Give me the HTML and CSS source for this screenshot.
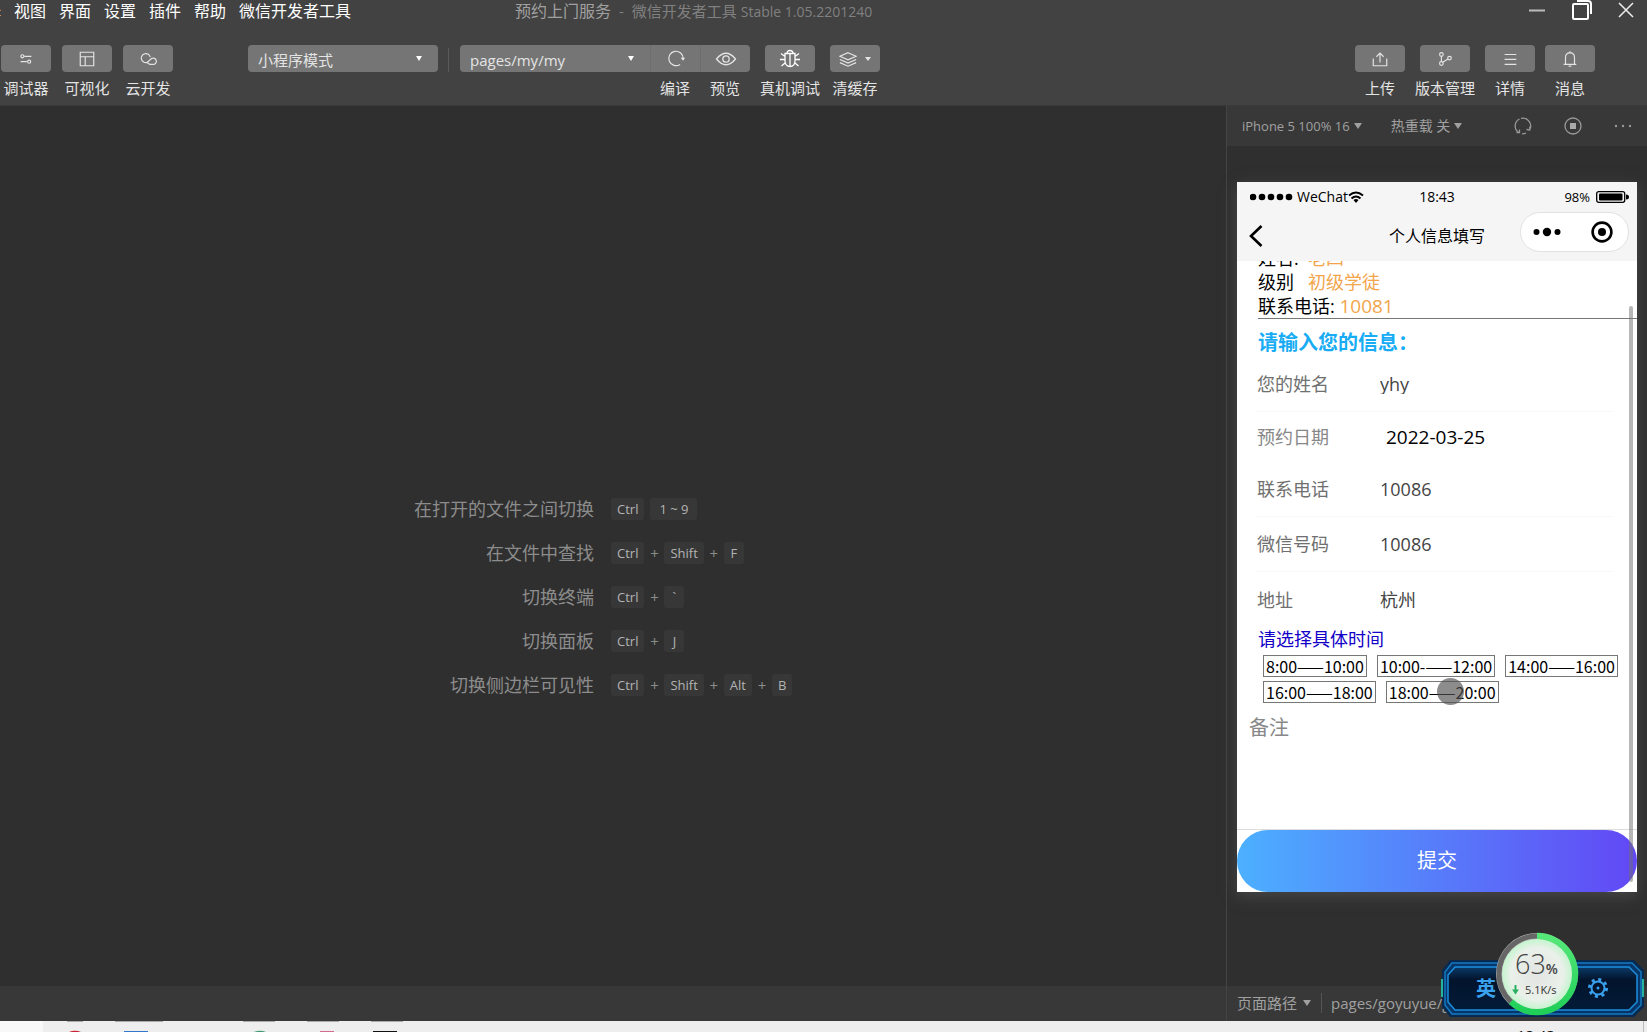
FILE: index.html
```html
<!DOCTYPE html>
<html lang="zh-CN">
<head>
<meta charset="utf-8">
<title>预约上门服务 - 微信开发者工具</title>
<link rel="stylesheet" href="styles.css">
</head>
<body>
<header class="header">
  <div class="titlebar">
    <nav class="menu">
      <a class="menu-first" href="#">选择</a><a href="#">视图</a><a href="#">界面</a><a href="#">设置</a><a href="#">插件</a><a href="#">帮助</a><a href="#">微信开发者工具</a>
    </nav>
    <div class="title"><span class="project">预约上门服务</span><span>-</span><span>微信开发者工具 <span class="version">Stable 1.05.2201240</span></span></div>
    <div class="window-buttons">
      <button aria-label="最小化"><svg width="18" height="22" viewBox="0 0 18 22"><path d="M1 10.500h16" stroke="#bbb" stroke-width="2"/></svg></button>
      <button aria-label="还原"><svg width="22" height="22" viewBox="0 0 22 22" fill="none" stroke="#fff" stroke-width="2"><rect x="2" y="4" width="15" height="15" rx="1"/><path d="M6 1h11q3 0 3 3v10"/></svg></button>
      <button aria-label="关闭"><svg width="16" height="22" viewBox="0 0 16 22" fill="none" stroke="#eee" stroke-width="1.500"><path d="M1 3l14 14M15 3L1 17"/></svg></button>
    </div>
  </div>
  <div class="toolbar">
    <div class="tools views">
      <div class="tool"><button class="tool-button" id="t1" aria-labelledby="l1"><svg class="icon" viewBox="0 0 20 20"><circle cx="6" cy="7" r="1.700"/><path d="M8 7h8M4 13h7"/><circle cx="13.500" cy="13" r="1.700"/></svg></button><label id="l1" for="t1">调试器</label></div>
      <div class="tool"><button class="tool-button" id="t2" aria-labelledby="l2"><svg class="icon" viewBox="0 0 20 20"><path d="M2.500 2.500h15v15h-15zM2.500 7.500h15M8 7.500v10"/></svg></button><label id="l2" for="t2">可视化</label></div>
      <div class="tool"><button class="tool-button" id="t3" aria-labelledby="l3"><svg class="icon" viewBox="0 0 20 20"><path d="M12.500 8a5 5 0 1 0-3.500 5.800L14 9.500a3.500 3.500 0 1 1 1.500 6.500H12l-3-2.200"/></svg></button><label id="l3" for="t3">云开发</label></div>
    </div>
    <div class="picker mode"><select aria-label="模式"><option>小程序模式</option></select></div>
    <div class="divider"></div>
    <div class="compile">
      <div class="picker page"><select aria-label="页面"><option>pages/my/my</option></select></div>
      <div class="tool"><button class="tool-button joined" id="t4" aria-labelledby="l4"><svg class="icon" viewBox="0 0 20 20"><path d="M14.500 16A8 8 0 1 1 18 9.500"/><path d="M15 8.500h5l-2 3.500z" fill="#e4e4e4" stroke="none"/></svg></button><label id="l4" for="t4">编译</label></div>
      <div class="tool"><button class="tool-button joined last" id="t5" aria-labelledby="l5"><svg class="icon wide" viewBox="0 0 20 20"><path d="M.5 10Q10-1.500 19.500 10 10 21.500.5 10z"/><circle cx="10" cy="10" r="3.200"/></svg></button><label id="l5" for="t5">预览</label></div>
    </div>
    <div class="tools">
      <div class="tool"><button class="tool-button" id="t6" aria-labelledby="l6"><svg class="icon wide bright" viewBox="0 0 20 20"><path d="M7 4.500q0-3 3-3t3 3M5 4.500h10v7q0 6-5 6t-5-6zM10 4.500v13M5 7.500L1 4.500M5 10.500H0M5 14l-3.500 3M15 7.500l4-3M15 10.500h5M15 14l3.500 3"/></svg></button><label id="l6" for="t6">真机调试</label></div>
      <div class="tool"><button class="tool-button" id="t7" aria-labelledby="l7"><svg class="icon" viewBox="0 0 20 20"><path d="M10 3l9 4-9 4-9-4zM1 10.500l9 4 9-4M1 14l9 4 9-4"/></svg><span class="caret tiny"></span></button><label id="l7" for="t7">清缓存</label></div>
    </div>
    <div class="tools right">
      <div class="tool"><button class="tool-button" id="t8" aria-labelledby="l8"><svg class="icon" viewBox="0 0 20 20"><path d="M2.500 9.500v8h15v-8M10 14V4M6 7.500l4-4 4 4"/></svg></button><label id="l8" for="t8">上传</label></div>
      <div class="tool"><button class="tool-button" id="t9" aria-labelledby="l9"><svg class="icon" viewBox="0 0 20 20"><circle cx="6" cy="5" r="2"/><circle cx="6" cy="15" r="2"/><circle cx="15" cy="9" r="2"/><path d="M6 7v6M7.500 13.500l5.800-3.500"/></svg></button><label id="l9" for="t9">版本管理</label></div>
      <div class="tool"><button class="tool-button" id="t10" aria-labelledby="l10"><svg class="icon" viewBox="0 0 20 20"><path d="M4 5h13M4 10.500h13M4 16h13"/></svg></button><label id="l10" for="t10">详情</label></div>
      <div class="tool"><button class="tool-button" id="t11" aria-labelledby="l11"><svg class="icon" viewBox="0 0 20 20"><path d="M3 16h14M5 16V8.500q0-5 5-5.500 5 .5 5 5.500V16M10 3V1.500M8.500 18h3"/></svg></button><label id="l11" for="t11">消息</label></div>
    </div>
  </div>
</header>

<main class="main">
  <section class="editor">
    <dl class="shortcuts">
      <dt>在打开的文件之间切换</dt><dd><kbd>Ctrl</kbd><i></i><kbd class="range">1 ~ 9</kbd></dd>
      <dt>在文件中查找</dt><dd><kbd>Ctrl</kbd><b>+</b><kbd>Shift</kbd><b>+</b><kbd>F</kbd></dd>
      <dt>切换终端</dt><dd><kbd>Ctrl</kbd><b>+</b><kbd>`</kbd></dd>
      <dt>切换面板</dt><dd><kbd>Ctrl</kbd><b>+</b><kbd>J</kbd></dd>
      <dt>切换侧边栏可见性</dt><dd><kbd>Ctrl</kbd><b>+</b><kbd>Shift</kbd><b>+</b><kbd>Alt</kbd><b>+</b><kbd>B</kbd></dd>
    </dl>
    <div class="statusbar"></div>
  </section>

  <aside class="simulator">
    <div class="sim-toolbar">
      <button class="sim-device">iPhone 5 100% 16<span class="caret"></span></button>
      <button class="sim-reload">热重载 关<span class="caret"></span></button>
      <div class="sim-actions">
        <button aria-label="刷新"><svg width="18" height="18" viewBox="0 0 18 18" fill="none" stroke="#999" stroke-width="1.300"><path d="M5.500 2A7.800 7.800 0 0 0 5 15.700M7 1.400A7.800 7.800 0 0 1 15.500 13M8 16.800A7.800 7.800 0 0 0 12 16M2.500 15.500H5.500V12.500M15.800 9.500V13L12.500 12.500"/></svg></button>
        <button aria-label="停止"><svg width="18" height="18" viewBox="0 0 18 18"><circle cx="9" cy="9" r="8" fill="none" stroke="#999" stroke-width="1.300"/><rect x="6" y="6" width="6" height="6" fill="#aaa"/></svg></button>
        <button aria-label="更多"><svg width="18" height="18" viewBox="0 0 18 18" fill="#999"><circle cx="2" cy="9" r="1.200"/><circle cx="9" cy="9" r="1.200"/><circle cx="16" cy="9" r="1.200"/></svg></button>
      </div>
    </div>

    <div class="stage">
      <div class="phone">
        <div class="phone-status">
          <div class="carrier"><svg width="43" height="10" viewBox="0 0 43 10"><circle cx="3" cy="5" r="3.300"/><circle cx="12" cy="5" r="3.300"/><circle cx="21" cy="5" r="3.300"/><circle cx="30" cy="5" r="3.300"/><circle cx="39" cy="5" r="3.300"/></svg><span>WeChat</span><svg width="16" height="12" viewBox="0 0 16 12" fill="none" stroke="#000" stroke-width="2"><path d="M1 4.500q7-6 14 0M3.500 7.500q4.500-4 9 0"/><path d="M5.500 9q2.500-2 5 0L8 12z" fill="#000" stroke="none"/></svg></div>
          <time>18:43</time>
          <div class="battery"><span>98%</span><svg width="33" height="12" viewBox="0 0 33 12"><rect x=".7" y=".7" width="28" height="10.600" rx="2" fill="none" stroke="#000" stroke-width="1.300"/><rect x="3" y="2.500" width="23.500" height="7" rx="1"/><path d="M30 3.500q3 0 3 2.500t-3 2.500z"/></svg></div>
        </div>
        <div class="phone-nav">
          <button class="back" aria-label="返回"><svg width="14" height="24" viewBox="0 0 14 24" fill="none" stroke="#000" stroke-width="2.600"><path d="M12.500 2L2 12l10.500 10"/></svg></button>
          <h1>个人信息填写</h1>
          <div class="capsule">
            <button aria-label="菜单"><svg width="28" height="10" viewBox="0 0 28 10"><circle cx="3.500" cy="5" r="3"/><circle cx="14" cy="5" r="4.200"/><circle cx="24.500" cy="5" r="3"/></svg></button>
            <button aria-label="退出"><svg width="22" height="22" viewBox="0 0 22 22"><circle cx="11" cy="11" r="9.400" fill="none" stroke="#000" stroke-width="2.600"/><circle cx="11" cy="11" r="4"/></svg></button>
          </div>
        </div>
        <form class="phone-page">
          <div class="profile">
            <p>姓名:&nbsp; <em>老四</em></p>
            <p>级别&nbsp;&nbsp; <em>初级学徒</em></p>
            <p>联系电话: <em class="number">10081</em></p>
          </div>
          <h2>请输入您的信息：</h2>
          <div class="field"><label for="name">您的姓名</label><input id="name" value="yhy"></div>
          <div class="field date"><label for="day">预约日期</label><input id="day" value="2022-03-25"></div>
          <div class="field"><label for="phone">联系电话</label><input id="phone" value="10086"></div>
          <div class="field"><label for="wechat">微信号码</label><input id="wechat" value="10086"></div>
          <div class="field plain"><label for="address">地址</label><input id="address" value="杭州"></div>
          <h3>请选择具体时间</h3>
          <div class="slots">
            <button type="button">8:00——10:00</button><button type="button">10:00-——12:00</button><button type="button">14:00——16:00</button><button type="button">16:00——18:00</button><button type="button" class="pressed">18:00——20:00</button>
          </div>
          <textarea aria-label="备注" placeholder="备注"></textarea>
          <button type="button" class="submit">提交</button>
          <div class="scrollbar"></div>
        </form>
      </div>
    </div>

    <div class="path-bar">
      <button>页面路径<span class="caret"></span></button>
      <span class="path">pages/goyuyue/g</span>
    </div>
  </aside>
</main>

<footer class="taskbar">
  <div class="start"></div>
  <svg class="apps" width="400" height="11" viewBox="0 0 400 11">
    <path d="M24 .5h16M72 .5h48M200 .5h32M264 .5h32M328 .5h32" stroke="#aaa"/>
    <path d="M26 11q6-2.500 12 0z" fill="#c23"/><path d="M81 11v-1h24v1z" fill="#37c"/><path d="M211 11q6-2.500 12 0z" fill="#497"/><path d="M277 11v-1h14v1z" fill="#d46a8c"/><path d="M330 11v-1h24v1z" fill="#111"/>
  </svg>
  <time class="clock">18:43</time>
</footer>

<svg class="widget" width="208" height="90" viewBox="0 0 208 90" role="img" aria-label="输入法与网速">
  <defs>
    <linearGradient id="panel" x1="0" y1="0" x2="0" y2="1"><stop offset="0" stop-color="#0b3a68"/><stop offset=".3" stop-color="#03142c"/><stop offset="1" stop-color="#031b38"/></linearGradient>
    <linearGradient id="ring" x1="0" y1="0" x2="0" y2="1"><stop offset="0" stop-color="#55e878"/><stop offset="1" stop-color="#1fcf58"/></linearGradient>
    <radialGradient id="dial"><stop offset="0" stop-color="#e2e5e2"/><stop offset=".75" stop-color="#eaf0ea"/><stop offset="1" stop-color="#c4f5ce"/></radialGradient>
  </defs>
  <path d="M12 29h184l10 10v37l-10 10H12L4 76V39z" fill="#092a50"/>
  <path d="M14 32h180l9 9v33l-9 9H14l-7-9V41z" fill="#063569" stroke="#1579c0" stroke-width="1.500"/>
  <path d="M17 36h174l8 8v27l-8 8H17l-7-8V44z" fill="url(#panel)" stroke="#1c8fdd" stroke-width="1.500"/>
  <path d="M4 48v18M205 48v18" stroke="#23b4a0" stroke-width="2"/>
  <text x="38" y="65" class="ime">英</text>
  <g fill="none" stroke="#3aa1ee"><circle cx="160" cy="57" r="6.500" stroke-width="2"/><circle cx="160" cy="57" r="8.500" stroke-width="3" stroke-dasharray="3 3.676"/></g>
  <circle cx="160" cy="57" r="1.500" fill="#3aa1ee"/>
  <circle cx="99" cy="43" r="41" fill="#b9b4b4"/><circle cx="99" cy="43" r="38" fill="none" stroke="#666" stroke-width="5"/>
  <path d="M99 5a38 38 0 1 1-26 65.700" fill="none" stroke="url(#ring)" stroke-width="6.500"/>
  <circle cx="99" cy="43" r="35" fill="url(#dial)"/>
  <text x="77" y="43" class="percent">63<tspan class="percent-sign">%</tspan></text>
  <path d="M77.500 54v6" stroke="#28b060" stroke-width="2"/><path d="M74 58.500h7l-3.500 5z" fill="#28b060"/>
  <text x="87" y="63" class="speed">5.1K/s</text>
</svg>
</body>
</html>
```
FILE: styles.css
```css
* { box-sizing: border-box; }

body {
  margin: 0;
  height: 100vh;
  display: flex;
  flex-direction: column;
  overflow: hidden;
  background: #2f2f2f;
  color: #e4e4e4;
  font: 15px/20px "Open Sans", "Noto Sans CJK SC", sans-serif;
}

button, input, select, textarea {
  margin: 0;
  padding: 0;
  border: 0;
  background: none;
  color: inherit;
  font: inherit;
}

button svg { display: block; }

.header {
  flex: none;
  background: #424242;
  border-bottom: 1px solid #3a3a3a;
}

.titlebar {
  display: grid;
  grid-template-columns: 515px 1fr auto;
  height: 45px;
  align-items: start;
  line-height: 22px;
}

.menu {
  display: flex;
  gap: 13px;
  font-size: 16px;
  overflow: hidden;
}

.menu a {
  color: #fff;
  text-decoration: none;
  white-space: nowrap;
}

.menu-first { margin-left: -31px; }

.title {
  display: flex;
  gap: 8px;
  color: #808080;
}

.project {
  color: #a0a0a0;
  font-size: 16px;
}

.version { font-size: 14px; }

.window-buttons {
  display: flex;
  gap: 25px;
  padding-right: 13px;
}

.toolbar {
  display: flex;
  align-items: flex-start;
  height: 60px;
  padding: 0 52px 0 1px;
}

.tools {
  display: flex;
  gap: 10px;
}

.views { gap: 11px; }

.right { margin-left: auto; }

.tool {
  display: flex;
  flex-direction: column;
  align-items: center;
  gap: 6px;
  min-width: 50px;
  white-space: nowrap;
}

.tool-button {
  display: flex;
  align-items: center;
  justify-content: center;
  gap: 8px;
  width: 50px;
  height: 27px;
  border-radius: 4px;
  background: #757575;
}

.icon {
  width: 18px;
  height: 18px;
  fill: none;
  stroke: #e4e4e4;
  stroke-width: 1.300;
}

.wide {
  width: 22px;
  height: 20px;
}

.bright { stroke: #fff; }

.caret {
  display: inline-block;
  border: 4px solid transparent;
  border-top: 6px solid currentColor;
  border-bottom: 0;
}

.tiny {
  border-width: 3px;
  border-top-width: 4px;
  border-bottom: 0;
}

.picker {
  display: grid;
  align-items: center;
  width: 190px;
  height: 27px;
  border-radius: 4px;
  background: #757575;
}

.picker select {
  grid-area: 1 / 1;
  appearance: none;
  padding: 2px 10px 0;
  width: 100%;
  height: 27px;
}

.picker::after {
  content: "";
  grid-area: 1 / 1;
  justify-self: end;
  margin-right: 16px;
  border: 3px solid transparent;
  border-top: 5px solid #fff;
  border-bottom: 0;
  pointer-events: none;
}

.mode { margin-left: 75px; }

.divider {
  width: 1px;
  height: 24px;
  margin: 3px 11px 0 10px;
  background: #5a5a5a;
}

.compile {
  display: flex;
  margin-right: 10px;
}

.page { border-radius: 4px 0 0 4px; }
.joined { border-radius: 0; border-left: 1px solid #6d6d6d; }
.last { border-radius: 0 4px 4px 0; }

.main {
  flex: 1;
  min-height: 0;
  display: grid;
  grid-template-columns: 1fr 421px;
}

.editor {
  display: flex;
  flex-direction: column;
}

.shortcuts {
  flex: 1;
  display: grid;
  grid-template-columns: 1fr 1fr;
  grid-auto-rows: 44px;
  align-content: center;
  align-items: center;
  column-gap: 17px;
  margin: 0;
  padding: 102px 21px 0 0;
  color: #8c8c8c;
}

.shortcuts dt {
  text-align: right;
  font-size: 18px;
}

.shortcuts dd {
  display: flex;
  align-items: center;
  margin: 0;
}

.shortcuts kbd {
  min-width: 20px;
  padding: 0 6px;
  border-radius: 3px;
  background: #373737;
  color: #b4b4b4;
  font: 13px/22px "Open Sans", sans-serif;
  text-align: center;
}

.shortcuts .range { padding: 0 9px; }

.shortcuts b {
  width: 20px;
  text-align: center;
  font-weight: 400;
}

.shortcuts i { width: 6px; }

.statusbar {
  height: 35px;
  background: #383838;
}

.simulator {
  display: flex;
  flex-direction: column;
  min-height: 0;
  border-left: 1px solid #444;
  color: #a0a0a0;
}

.sim-toolbar {
  display: flex;
  align-items: center;
  height: 40px;
  padding: 0 15px;
  background: #383838;
  font-size: 14px;
}

.sim-toolbar button {
  display: flex;
  align-items: center;
  gap: 4px;
  white-space: nowrap;
}

.sim-toolbar .sim-device { font-size: 13px; }
.sim-reload { margin-left: 29px; }

.sim-actions {
  display: flex;
  gap: 32px;
  margin-left: auto;
}

.stage {
  flex: 1;
  min-height: 0;
  padding: 36px 10px 0;
}

.phone {
  background: #fff;
  color: #000;
  box-shadow: 0 4px 14px #484848;
}

.phone-status {
  display: grid;
  grid-template-columns: 1fr auto 1fr;
  align-items: center;
  height: 29px;
  padding: 0 8px;
  background: #f5f5f5;
  font-size: 14px;
}

.carrier, .battery {
  display: flex;
  align-items: center;
}

.carrier { padding-left: 5px; }
.carrier span { margin-left: 4px; }

.battery {
  justify-content: flex-end;
  gap: 6px;
  font-size: 13px;
}

.phone-nav {
  display: grid;
  grid-template-columns: 1fr auto 1fr;
  align-items: center;
  height: 50px;
  padding: 0 8px;
  background: #f5f5f5;
}

.back {
  justify-self: start;
  padding-left: 4px;
}

.phone-nav h1 {
  margin: 0;
  font-size: 16px;
  font-weight: 400;
}

.capsule {
  justify-self: end;
  display: flex;
  align-items: center;
  justify-content: space-between;
  width: 109px;
  height: 40px;
  margin-bottom: 8px;
  padding: 0 15px 0 12px;
  border: 1px solid #e2e2e2;
  border-radius: 20px;
  background: #fff;
}

.phone-page {
  position: relative;
  display: flex;
  flex-direction: column;
  height: 631px;
  overflow: hidden;
}

.profile {
  margin: -15px 0 0 21px;
  border-bottom: 1px solid #777;
  font-size: 18px;
  line-height: 24px;
}

.profile p { margin: 0; }

.profile em {
  color: #f2a54a;
  font-style: normal;
}

.profile .number { font-size: 19px; }

.phone-page h2 {
  margin: 10px 21px 0;
  color: #18acf5;
  font-size: 20px;
  font-weight: 700;
  line-height: 28px;
}

.field {
  display: flex;
  align-items: center;
  flex: none;
  height: 55px;
  margin: 0 24px 0 20px;
  border-bottom: 1px solid #f8f8f8;
  color: #707070;
  font-size: 18px;
}

.field label { width: 123px; }

.field input {
  flex: 1;
  min-width: 0;
  color: #444;
  font-size: 18px;
}

.date {
  height: 50px;
  border: 0;
  color: #888;
}

.date input {
  padding-left: 6px;
  color: #000;
  font-size: 19px;
}

.plain { border: 0; }

.phone-page h3 {
  margin: 0 21px;
  color: #1200c8;
  font-size: 18px;
  font-weight: 400;
  line-height: 24px;
}

.slots {
  display: flex;
  flex-wrap: wrap;
  gap: 4px 10px;
  margin: 4px 0 0 26px;
}

.slots button {
  height: 22px;
  padding: 0 2px;
  border: 1px solid #777;
  font-family: "Noto Sans CJK SC", sans-serif;
  font-size: 16px;
  line-height: 20px;
}

.pressed { position: relative; }

.pressed::after {
  content: "";
  position: absolute;
  left: 50px;
  top: -4px;
  width: 27px;
  height: 27px;
  border-radius: 50%;
  background: #505050a8;
}

.phone-page textarea {
  flex: 1;
  min-height: 0;
  resize: none;
  padding: 11px 12px;
  border-bottom: 1px solid #ddd;
  font-size: 20px;
  line-height: 28px;
}

.phone-page textarea::placeholder { color: #888; }

.submit {
  flex: none;
  height: 62px;
  border-radius: 31px;
  background: linear-gradient(90deg, #4cb0ff, #6248f5);
  color: #fff;
  font-size: 20px;
}

.scrollbar {
  position: absolute;
  top: 45px;
  right: 4px;
  bottom: 10px;
  width: 4px;
  border-radius: 2px;
  background: #70707080;
}

.path-bar {
  display: flex;
  align-items: center;
  height: 35px;
  padding: 0 0 2px 10px;
  background: #383838;
  overflow: hidden;
}

.path-bar button {
  display: flex;
  align-items: center;
  gap: 6px;
  white-space: nowrap;
}

.path {
  margin-left: 10px;
  padding-left: 9px;
  border-left: 1px solid #555;
}

.taskbar {
  flex: none;
  display: flex;
  height: 11px;
  overflow: hidden;
  background: #eee;
  color: #111;
}

.start {
  width: 43px;
  background: #f8f8f8;
}

.apps {
  flex: none;
  display: block;
}

.clock {
  margin-left: auto;
  padding: 4px 88px 0 0;
  border-right: 1px solid #bbb;
  margin-right: 3px;
}

.widget {
  position: absolute;
  right: 1px;
  bottom: 11px;
}

.ime {
  fill: #3aa1ee;
  font: 700 20px "Noto Sans CJK SC", sans-serif;
}

.percent {
  fill: #444;
  font: 300 27px "Open Sans", sans-serif;
}

.percent-sign { font-size: 14px; font-weight: 600; }

.speed {
  fill: #333;
  font: 11px "Open Sans", sans-serif;
}
```
